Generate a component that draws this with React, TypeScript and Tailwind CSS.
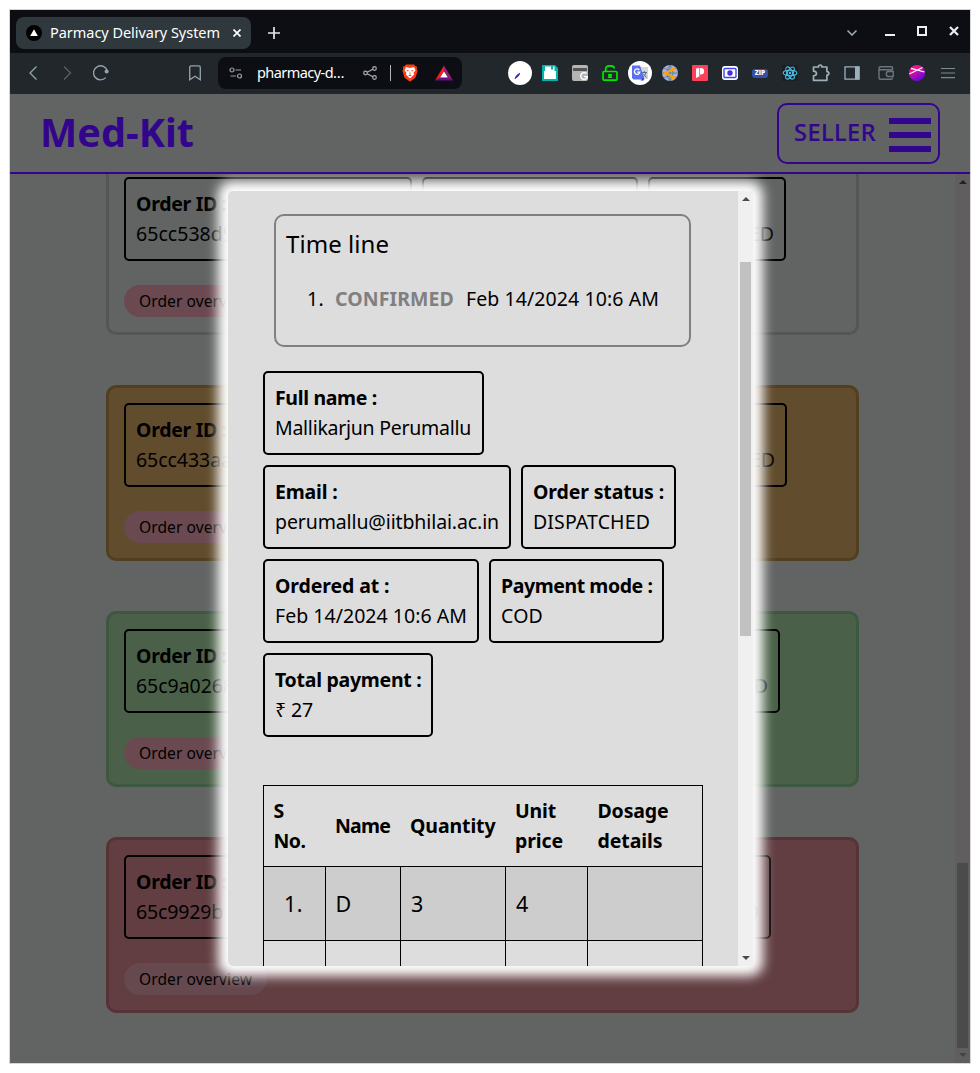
import { useLayoutEffect, useRef, useState, type ReactNode } from "react";

/* Spreads its text evenly over a given width. */
function Fit({ w, children, className = "" }: { w: number; children: string; className?: string }) {
  const ref = useRef<HTMLSpanElement>(null);
  const [gap, setGap] = useState(0);
  useLayoutEffect(() => {
    const el = ref.current;
    if (el) setGap((w - el.getBoundingClientRect().width) / children.length);
  }, []);
  return (
    <span ref={ref} className={`inline-block whitespace-pre ${className}`} style={{ letterSpacing: gap }}>
      {children}
    </span>
  );
}

function Field({ label, lw, value, vw, className }: { label: string; lw: number; value: string; vw: number; className: string }) {
  return (
    <div className={`flex h-[84px] shrink-0 flex-col items-start rounded-[5px] border-2 border-black p-2.5 text-[19.5px] leading-[30px] ${className}`}>
      <Fit w={lw} className="font-bold">{label}</Fit>
      <Fit w={vw}>{value}</Fit>
    </div>
  );
}

function OrderCard({ id, idw, status, card, pill, last }: { id: string; idw: number; status: string; card: string; pill: string; last: string }) {
  return (
    <section className={`flex h-[176px] w-[753px] shrink-0 flex-col items-start gap-6 rounded-[10px] border-[3px] p-[15px] ${card}`}>
      <div className="flex gap-2.5">
        <Field label="Order ID :" lw={91} value={id} vw={idw} className="w-[288px]" />
        <div className="h-[84px] w-[216px] rounded-[5px] border-2 border-black" />
        <div className={`flex h-[84px] items-end justify-end rounded-[5px] border-2 border-black p-2.5 text-[19.5px] leading-[30px] ${last}`}>{status}</div>
      </div>
      <button className={`flex h-8 w-[143px] items-center rounded-full px-[15px] pt-0.5 text-[15.6px] ${pill}`}>
        <Fit w={113}>Order overview</Fit>
      </button>
    </section>
  );
}

function Arrow({ down, className }: { down?: boolean; className: string }) {
  return (
    <svg viewBox="0 0 8 4" className={`h-1 w-2 ${className}`} fill="currentColor">
      <path d={down ? "M0 0h8L4 4z" : "M0 4h8L4 0z"} />
    </svg>
  );
}

function Slot({ className, children }: { className: string; children: ReactNode }) {
  return <span className={`flex shrink-0 items-center justify-center ${className}`}>{children}</span>;
}

function TabBar() {
  return (
    <div className="flex h-[43px] items-center bg-[#0c0e13] pl-1.5 text-white">
      <div className="mt-[3px] flex h-8 w-[235px] items-center rounded-lg bg-[#2f383d] pl-2.5">
        <svg viewBox="0 0 16 16" className="h-4 w-4"><circle cx="8" cy="8" r="8" fill="#000" /><path d="M8 4.3 11.8 11H4.2z" fill="#fff" /></svg>
        <Fit w={170} className="ml-2 text-[14.5px]">Parmacy Delivary System</Fit>
        <svg viewBox="0 0 8 8" className="ml-[13px] h-2 w-2" stroke="#fff" strokeWidth="1.7"><path d="m.5.5 7 7m0-7-7 7" /></svg>
      </div>
      <svg viewBox="0 0 12 12" className="mt-[3px] ml-[17px] h-3 w-3" stroke="#e4e6e8" strokeWidth="1.7"><path d="M6 0v12M0 6h12" /></svg>
      <div className="mb-px ml-auto flex items-center pr-[11px]">
        <svg viewBox="0 0 10 6" className="mt-1 h-1.5 w-2.5" fill="none" stroke="#9fb0b9" strokeWidth="1.5"><path d="M.5.5 5 5 9.500.5" /></svg>
        <svg viewBox="0 0 10 10" className="ml-7 h-2.5 w-2.5" fill="#eee"><path d="M0 8h10v2H0z" /></svg>
        <svg viewBox="0 0 10 10" className="ml-[22px] h-2.5 w-2.5" fill="none" stroke="#eee" strokeWidth="2"><path d="M1 1h8v8H1z" /></svg>
        <svg viewBox="0 0 10 10" className="ml-[22px] h-2.5 w-2.5" stroke="#eee" strokeWidth="2.2"><path d="m1 1 8 8m0-8L1 9" /></svg>
      </div>
    </div>
  );
}

function Toolbar() {
  return (
    <div className="flex h-[41px] items-center bg-[#22272b] pb-px">
      <Slot className="ml-[15px] w-4"><svg viewBox="0 0 16 16" className="h-4 w-4" fill="none" stroke="#93a5ae" strokeWidth="1.3"><path d="M11.500 1.500 5 8l6.500 6.500" /></svg></Slot>
      <Slot className="ml-[18px] w-4"><svg viewBox="0 0 16 16" className="h-4 w-4" fill="none" stroke="#566168" strokeWidth="1.3"><path d="M5 1.500 11.500 8 5 14.500" /></svg></Slot>
      <Slot className="ml-[18px] w-4"><svg viewBox="0 0 16 16" className="h-4 w-4" fill="none" stroke="#93a5ae" strokeWidth="1.4"><path d="M12.700 12.600A7 7 0 1 1 14.300 6" /><circle cx="13.600" cy="6.500" r="2" fill="#93a5ae" stroke="none" /></svg></Slot>
      <Slot className="ml-[78px] w-4"><svg viewBox="0 0 16 16" className="h-4 w-4" fill="none" stroke="#93a5ae" strokeWidth="1.3"><path d="M2.700 2.500Q2.700.8 4.400.8h7.200q1.700 0 1.700 1.700v12.300L8 11.300l-5.300 3.500z" /></svg></Slot>
      <div className="ml-[15px] flex h-8 w-[244px] items-center rounded-lg bg-[#0c0e13] pl-[11px]">
        <svg viewBox="0 0 14 12" className="h-3 w-3.5" fill="none" stroke="#9aa0a4" strokeWidth="1.2"><circle cx="3" cy="3" r="2" /><path d="M6.500 3H12M1.500 9H7" /><circle cx="10.500" cy="9" r="2" /></svg>
        <Fit w={87} className="ml-3.5 text-[14.5px] text-white">pharmacy-d…</Fit>
        <svg viewBox="0 0 14 14" className="ml-[19px] h-3.5 w-3.5" fill="none" stroke="#a9aeb1" strokeWidth="1.200"><circle cx="2.500" cy="7" r="1.800" /><circle cx="11.500" cy="2.500" r="1.800" /><circle cx="11.500" cy="11.500" r="1.800" /><path d="m4.200 6.200 5.600-2.900M4.200 7.800l5.600 2.900" /></svg>
        <span className="ml-[13px] h-4 w-px bg-[#b0b4b6]" />
        <svg viewBox="0 0 16 18" className="ml-[11px] h-[18px] w-4"><path d="m4 .4 8 0 1.500 1.800 1.800.6-.5 2 .8 2.200-2.200 6.700L8 17.800l-5.400-4.100L.4 7l.8-2.200-.5-2 1.800-.6z" fill="#fb3b10" /><path d="m8 4 4-.9 1.500 3.100-2 2.700.6 1.600L8 14.500l-4.100-4 .6-1.600-2-2.700L4 3.100z" fill="#fff" /><path d="m4.300 5.900 2.700.6-1.200.9zm7.400 0-2.700.6 1.200.9zM8 7l.5 3h-1zM6.200 11.300 8 10.600l1.800.7L8 12.300z" fill="#fb3b10" /></svg>
        <svg viewBox="0 0 18 16" className="ml-[17px] h-4 w-[18px]"><path d="M9 .4 0 15.500l5-2.600L9 6z" fill="#ff1c12" /><path d="m9 .4 9 15.100-5-2.600L9 6z" fill="#9a1b72" /><path d="M0 15.500h18l-5-3H5z" fill="#62118c" /><path d="M9 6.300 12.800 12.500H5.200z" fill="#fff" /></svg>
      </div>
      <div className="ml-[46px] flex items-center">
        <svg viewBox="0 0 24 24" className="h-6 w-6"><circle cx="12" cy="12" r="12" fill="#fff" /><path d="M7 17.500q.8-3 4.700-5.200Q11.500 15 7 17.500z" fill="#4c1bbf" stroke="#4c1bbf" /></svg>
        <svg viewBox="0 0 16 16" className="ml-2.5 h-4 w-4"><path d="M0 0h13l3 3v13H0z" fill="#00b5ad" /><path d="M3 1.500h9.500V6H14v8H2V6h1z" fill="#fff" /><path d="M9 1h2v3.500H9z" fill="#00b5ad" /></svg>
        <svg viewBox="0 0 16 16" className="ml-3.5 h-4 w-4"><rect width="16" height="16" rx="2" fill="#b5b5b5" /><path d="M1 3h14v3H1z" fill="#555" /><path d="M14.500 8.600a3.400 3.400 0 1 0 1 3H12" fill="none" stroke="#fff" strokeWidth="1.400" /></svg>
        <svg viewBox="0 0 16 16" className="ml-3.5 h-4 w-4" fill="none" stroke="#00e800" strokeWidth="1.700"><rect x="1" y="6.500" width="14" height="8.700" rx="1.200" /><path d="M3.700 6.500V4q0-3.200 4.300-3.200T12.300 3.500" /><path d="M6 9h4v1.500L9 11l1 .8V13H6v-1.200L7 11l-1-.5z" fill="#00e800" stroke="none" /></svg>
        <svg viewBox="0 0 24 24" className="ml-2.5 h-6 w-6"><circle cx="12" cy="12" r="12" fill="#fff" /><path d="M10 6h10v12h-7z" fill="#d4d7db" /><path d="M4 4.500h8l4.500 14H5.500L4 17z" fill="#5a70ef" /><path d="m12.500 19.500 3.200 0-.3-3z" fill="#4b28cb" /><path d="M11.300 9a2.700 2.700 0 1 0 .5 2.200H9.200" fill="none" stroke="#fff" strokeWidth="1.300" /><path d="M13.500 11.500H19m-2.700-1.500v1.500m1.700 0q-.5 3-3.200 4.500m.2-3.500 3.500 4" stroke="#527084" fill="none" /></svg>
        <svg viewBox="0 0 16 16" className="ml-2.5 h-4 w-4"><circle cx="8" cy="8" r="8" fill="#a9aede" /><path d="M8 0v16M0 8h16M2 3q6 4 12 0M2 13q6-4 12 0M8 0Q2 8 8 16M8 0q6 8 0 16" fill="none" stroke="#547e80" strokeWidth=".8" /><path d="M11 4 4 8l7 4.300" fill="none" stroke="#ffa400" strokeWidth="1.600" /><circle cx="3.800" cy="8" r="2" fill="#ffa400" /><circle cx="11" cy="4" r="2" fill="#ffa400" /><circle cx="11" cy="12.300" r="2" fill="#ffa400" /></svg>
        <svg viewBox="0 0 16 16" className="ml-3.5 h-4 w-4"><rect width="16" height="16" rx="1" fill="#ff405b" /><path d="M4 3.500 7.300 3v8.500L4 13zM8 3h.8a3.300 3.300 0 0 1 0 6.600H8z" fill="#fff" /></svg>
        <svg viewBox="0 0 16 16" className="ml-3.5 h-4 w-4"><rect y="1" width="16" height="14" rx="3" fill="#fff" /><rect x="2" y="3.500" width="12" height="9" rx="1" fill="#fff" stroke="#3948f0" strokeWidth="1.400" /><circle cx="8" cy="8" r="2.700" fill="#4c2be0" /></svg>
        <span className="ml-3.5 flex h-[9px] w-4 items-center justify-center rounded-[3px] bg-[#2e52a8] font-['Open_Sans',sans-serif] text-[6.500px] leading-none font-extrabold text-white">ZIP</span>
        <svg viewBox="0 0 16 16" className="ml-3.5 h-4 w-4" fill="none" stroke="#4bc3e8" strokeWidth="1.100"><path d="M0 0h16v16H0z" fill="#1c2023" stroke="none" /><ellipse cx="8" cy="8" rx="6.800" ry="2.700" /><ellipse cx="8" cy="8" rx="6.800" ry="2.700" transform="rotate(60 8 8)" /><ellipse cx="8" cy="8" rx="6.800" ry="2.700" transform="rotate(120 8 8)" /><circle cx="8" cy="8" r="1.200" fill="#4bc3e8" stroke="none" /></svg>
        <svg viewBox="0 0 18 18" className="ml-3.5 h-[18px] w-[18px]" fill="none" stroke="#9cb0ba" strokeWidth="1.700"><path d="M1.500 3h5q0-2 1.700-2T9.900 3h5v4.600q2 0 2 1.700t-2 1.700v5.300H1.500v-4.500q3-.3 3-2.300t-3-2.300z" strokeLinejoin="round" /></svg>
        <svg viewBox="0 0 16 14" className="ml-3.5 h-3.5 w-4"><path d="M1 .8h14v12.400H1z" fill="none" stroke="#9cb0ba" strokeWidth="1.300" /><path d="M11 .5h4.500v13H11z" fill="#9cb0ba" /></svg>
        <svg viewBox="0 0 16 14" className="ml-[18px] h-3.5 w-4" fill="none" stroke="#6a767d" strokeWidth="1.400"><path d="M14.500 4V1.500Q14.500.8 13.500.8H2.500Q1 .8 1 2.400v9q0 1.800 1.800 1.800h10q1.700 0 1.700-1.500M1 2.600q.3 1.200 1.800 1.200h12M15.200 5.500v5H10Q8.300 10.300 8.300 8T10 5.500z" /></svg>
        <svg viewBox="0 0 16 16" className="ml-[15px] h-4 w-4"><defs><linearGradient id="orb" x1="0" y1="0" x2=".6" y2="1"><stop offset=".3" stopColor="#f5138f" /><stop offset="1" stopColor="#6307e0" /></linearGradient></defs><circle cx="8" cy="8" r="8" fill="url(#orb)" /><path d="M2 3.300 15.500 7M.3 9 13.500 2.500" stroke="#fff" strokeWidth="1.200" /></svg>
        <svg viewBox="0 0 14 12" className="ml-[16px] h-3 w-3.5" stroke="#7d8a91" strokeWidth="1.200"><path d="M0 1.500h14M0 6h14M0 10.700h14" /></svg>
      </div>
    </div>
  );
}

function Modal() {
  return (
    <div className="absolute top-[17px] left-[218px] z-10 flex h-[775px] w-[525px] overflow-hidden rounded-[5px] bg-[#ddd] shadow-[0_0_12px_9.5px_#fff]">
      <div className="flex w-[510px] flex-col items-start overflow-hidden pl-[35px]">
        <div className="mt-[23px] ml-[11px] h-[133px] w-[417px] shrink-0 rounded-[10px] border-2 border-[#808080] p-2.5">
          <div className="h-9 text-[24px] leading-9"><Fit w={103}>Time line</Fit></div>
          <div className="mt-[22px] flex text-[19.500px] leading-[30px]">
            <Fit w={17} className="ml-[21px]">1.</Fit>
            <Fit w={119} className="ml-[11px] font-bold text-[#808080]">CONFIRMED</Fit>
            <Fit w={193} className="ml-3">Feb 14/2024 10:6 AM</Fit>
          </div>
        </div>
        <div className="mt-6 flex w-[440px] flex-wrap gap-2.5">
          <Field label="Full name :" lw={102} value="Mallikarjun Perumallu" vw={196} className="w-[221px]" />
          <Field label="Email :" lw={62.5} value="perumallu@iitbhilai.ac.in" vw={224} className="w-[248px]" />
          <Field label="Order status :" lw={131} value="DISPATCHED" vw={117} className="w-[155px]" />
          <Field label="Ordered at :" lw={114.5} value="Feb 14/2024 10:6 AM" vw={192} className="w-[216px]" />
          <Field label="Payment mode :" lw={151.5} value="COD" vw={42} className="w-[175px]" />
          <Field label="Total payment :" lw={146.5} value="₹ 27" vw={38} className="w-[170px]" />
        </div>
        <table className="mt-12 w-[440px] shrink-0 table-fixed border-collapse border border-black text-left">
          <colgroup>
            <col className="w-[62px]" /><col className="w-[75px]" /><col className="w-[105px]" /><col className="w-[82px]" /><col className="w-[115px]" />
          </colgroup>
          <thead>
            <tr className="h-[81px] text-[19.500px] leading-[30px]">
              <th className="pl-[9.5px]"><Fit w={12}>S</Fit><br /><Fit w={32}>No.</Fit></th>
              <th className="pl-[9.5px]"><Fit w={55}>Name</Fit></th>
              <th className="pl-[9.5px]"><Fit w={85.5}>Quantity</Fit></th>
              <th className="pl-[9.5px]"><Fit w={41}>Unit</Fit><br /><Fit w={48}>price</Fit></th>
              <th className="pl-2.5"><Fit w={71}>Dosage</Fit><br /><Fit w={65}>details</Fit></th>
            </tr>
          </thead>
          <tbody>
            <tr className="h-[74px] bg-[#cdcdcd] text-[21.500px]">
              <td className="border border-black pt-0.5 pl-5"><Fit w={19}>1.</Fit></td>
              <td className="border border-black pt-0.5 pl-[9.5px]">D</td>
              <td className="border border-black pt-0.5 pl-2.5">3</td>
              <td className="border border-black pt-0.5 pl-2.5">4</td>
              <td className="border border-black" />
            </tr>
            <tr className="h-[74px] text-[21.500px]">
              <td className="border border-black" /><td className="border border-black" /><td className="border border-black" /><td className="border border-black" /><td className="border border-black" />
            </tr>
          </tbody>
        </table>
      </div>
      <div className="flex w-[15px] flex-col items-center bg-[#f0f0f0] text-[#4a4a4a]">
        <Arrow className="mt-1.5" />
        <div className="mt-[61px] h-[374px] w-[11px] bg-[#c1c1c1]" />
        <Arrow down className="mt-auto mb-1.5" />
      </div>
    </div>
  );
}

export default function App() {
  return (
    <div className="h-[1073px] w-[980px] bg-white pt-[9px] pl-[9px] font-['Noto_Sans','Open_Sans',sans-serif] text-black">
      <div className="flex h-[1055px] w-[962px] flex-col overflow-hidden border border-[#d6d6d6] bg-[#616462]">
        <TabBar />
        <Toolbar />
        <header className="z-20 flex h-20 shrink-0 items-center justify-between border-b-2 border-[#32058c] bg-[#616462] pr-[30px] pl-[30px] text-[#32058c]">
          <h1 className="pb-px text-[39.500px] leading-none font-bold"><Fit w={154}>Med-Kit</Fit></h1>
          <button className="flex h-[61px] w-[163px] items-center rounded-[10px] border-2 border-[#32058c] pl-[15px] text-[23.500px] font-medium [-webkit-text-stroke:0.2px_#32058c]">
            <Fit w={82}>SELLER</Fit>
            <span className="mt-1 ml-[13px] flex w-[42px] flex-col gap-2"><i className="h-1.5 bg-[#32058c]" /><i className="h-1.5 bg-[#32058c]" /><i className="h-1.5 bg-[#32058c]" /></span>
          </button>
        </header>
        <div className="relative flex h-[889px] shrink-0">
          <main className="flex w-[945px] flex-col items-start justify-end gap-[50px] overflow-hidden pb-[50px] pl-24">
            <OrderCard id="65cc538d9" idw={98} status="ED" card="border-[#545655]" pill="bg-[#6a4950]" last="w-[138px]" />
            <OrderCard id="65cc433aa" idw={96} status="ED" card="border-[#523f20] bg-[#614c2d]" pill="bg-[#6a4950]" last="w-[139px]" />
            <OrderCard id="65c9a0268" idw={98} status="D" card="border-[#3e5740] bg-[#4a6048]" pill="bg-[#6a4950]" last="w-[132px]" />
            <OrderCard id="65c9929b" idw={87} status="D" card="border-[#553336] bg-[#623e42]" pill="bg-[#66494f]" last="w-[123px]" />
          </main>
          <div className="flex w-[15px] flex-col items-center bg-[#605e5f] text-[#222]">
            <Arrow className="mt-1.5" />
            <div className="mt-auto h-[185px] w-[11px] bg-[#4b4b4b]" />
            <Arrow down className="mt-[5px] mb-1.5 text-[#444]" />
          </div>
          <Modal />
        </div>
      </div>
    </div>
  );
}
